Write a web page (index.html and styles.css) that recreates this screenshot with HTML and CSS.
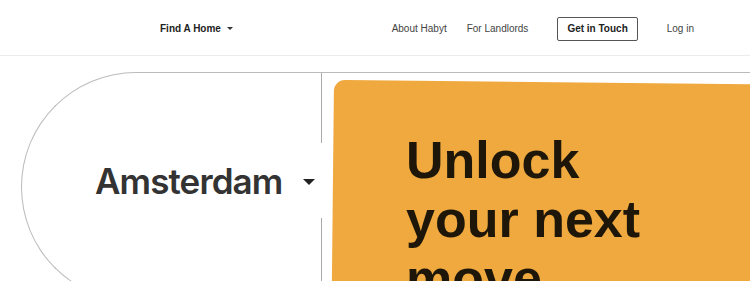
FILE: index.html
```html
<!DOCTYPE html>
<html>

<head>
    <meta charset="utf-8" />
    <title>Habyt</title>
    <link rel="stylesheet" href="styles.css">
</head>

<body>
    <header class="top">
        <div class="find">Find A Home <span class="caret-sm"></span></div>
        <nav class="links">
            <a class="link" href="#">About Habyt</a>
            <a class="link link-land" href="#">For Landlords</a>
            <a class="touch" href="#">Get in Touch</a>
            <a class="link link-log" href="#">Log in</a>
        </nav>
    </header>

    <main class="hero">
        <div class="search">
            <div class="city-col">
                <div class="city">
                    <span class="city-name">Amsterdam</span>
                    <span class="caret-lg"></span>
                </div>
            </div>
            <div class="card">
                <div class="card-bg"></div>
                <h1 class="title">Unlock<br>your next<br>move</h1>
            </div>
        </div>
    </main>
</body>

</html>
```

FILE: styles.css
```css
html,
body {
    margin: 0;
    padding: 0;
    overflow: hidden;
    background: #fff;
    font-family: "Liberation Sans", Arial, sans-serif;
}

a {
    text-decoration: none;
}

.top {
    height: 53px;
    border-bottom: 1px solid #ececec;
    display: flex;
    align-items: center;
    padding: 2px 56px 0 160px;
    box-sizing: content-box;
}

.find {
    font-size: 10px;
    font-weight: bold;
    color: #222;
    display: flex;
    align-items: center;
}

.caret-sm {
    display: inline-block;
    margin-left: 6px;
    border-left: 3px solid transparent;
    border-right: 3px solid transparent;
    border-top: 3px solid #333;
}

.links {
    margin-left: auto;
    display: flex;
    align-items: center;
}

.link {
    font-size: 10px;
    color: #444;
}

.link-land {
    margin-left: 20px;
}

.link-log {
    margin-left: 29px;
}

.touch {
    margin-left: 29px;
    height: 24px;
    box-sizing: border-box;
    padding: 0 9px;
    border: 1px solid #555;
    border-radius: 2px;
    font-size: 10px;
    font-weight: bold;
    color: #222;
    display: flex;
    align-items: center;
}

.hero {
    padding-top: 16px;
}

.search {
    margin-left: 21px;
    width: 900px;
    height: 230px;
    box-sizing: border-box;
    border: 1px solid #bbb;
    border-right: none;
    border-radius: 115px 0 0 115px;
    display: flex;
}

/* divider with a gap where the select sits */
.city-col {
    width: 300px;
    flex: none;
    box-sizing: border-box;
    padding-top: 70px;
    display: flex;
    flex-direction: column;
    background:
        linear-gradient(#aaa, #aaa) right top / 1px 70px no-repeat,
        linear-gradient(#aaa, #aaa) right bottom / 1px calc(100% - 145px) no-repeat;
}

.city {
    height: 75px;
    display: flex;
    align-items: center;
    padding-left: 73px;
}

.city-name {
    font-family: Inter, "Liberation Sans", sans-serif;
    font-size: 35px;
    font-weight: 600;
    color: #333;
    letter-spacing: -0.9px;
}

.caret-lg {
    margin-left: 21px;
    margin-top: 3px;
    border-left: 6px solid transparent;
    border-right: 6px solid transparent;
    border-top: 6px solid #222;
}

.card {
    position: relative;
    margin-left: 12px;
    margin-top: 7px;
    flex: 1;
    padding: 51px 0 0 72px;
}

.card-bg {
    position: absolute;
    left: 0;
    top: 0;
    right: 0;
    bottom: -40px;
    background: #efa93e;
    border-radius: 11px 0 0 0;
    transform: rotate(0.6deg);
    transform-origin: 0 0;
}

.title {
    position: relative;
    margin: 0;
    font-size: 52px;
    line-height: 59px;
    font-weight: bold;
    color: #1e1709;
}
```
